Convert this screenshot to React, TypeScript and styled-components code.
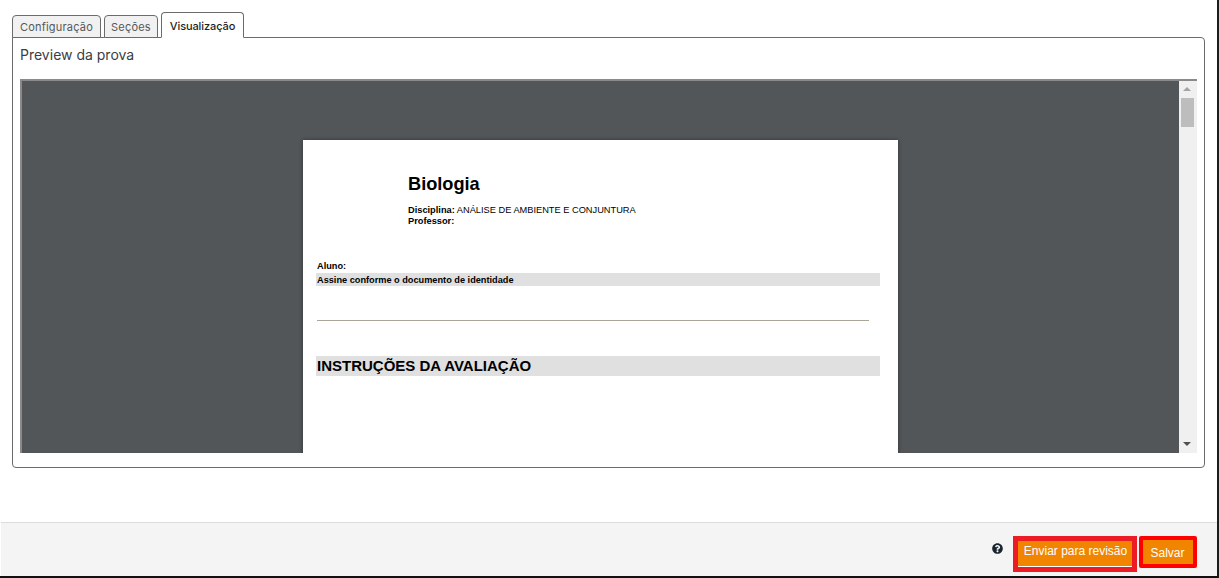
import styled, { createGlobalStyle } from "styled-components";
import { FaQuestionCircle } from "react-icons/fa";

const GlobalStyle = createGlobalStyle`
  html, body {
    margin: 0;
    padding: 0;
    background: #fff;
  }
  body {
    font-family: "Inter", "Noto Sans", sans-serif;
  }
`;

export default function App() {
  return (
    <>
      <GlobalStyle />
      <Screen>
        <Content>
          <Tabs>
            <Tab $width={89}>Configuração</Tab>
            <Tab $width={54}>Seções</Tab>
            <Tab $width={83} $active>
              Visualização
            </Tab>
          </Tabs>
          <Panel>
            <PanelTitle>Preview da prova</PanelTitle>
            <Viewer>
              <Canvas>
                <Page>
                  <Header>
                    <DocTitle>Biologia</DocTitle>
                    <MetaLine>
                      <b>Disciplina:</b> ANÁLISE DE AMBIENTE E CONJUNTURA
                    </MetaLine>
                    <MetaLine>
                      <b>Professor:</b>
                    </MetaLine>
                  </Header>
                  <StudentLabel>Aluno:</StudentLabel>
                  <SignBar>Assine conforme o documento de identidade</SignBar>
                  <SignLine />
                  <SectionBar>INSTRUÇÕES DA AVALIAÇÃO</SectionBar>
                </Page>
              </Canvas>
              <ScrollBar>
                <Arrow />
                <Track>
                  <Thumb />
                </Track>
                <Arrow $down />
              </ScrollBar>
            </Viewer>
          </Panel>
        </Content>
        <Footer>
          <HelpIcon />
          <ReviewButton>Enviar para revisão</ReviewButton>
          <SaveButton>Salvar</SaveButton>
        </Footer>
      </Screen>
    </>
  );
}

// ------- component styles ------
const Screen = styled.div`
  width: 1219px;
  height: 578px;
  box-sizing: border-box;
  border-right: 2px solid #1c1c1c;
  border-bottom: 2px solid #111;
  display: flex;
  flex-direction: column;
  overflow: hidden;
`;

const Content = styled.div`
  flex: 1;
  padding: 12px 12px 0;
`;

const Tabs = styled.div`
  display: flex;
  align-items: flex-end;
  gap: 3px;
  height: 26px;
  margin-bottom: -1px;
  position: relative;
  z-index: 1;
`;

const Tab = styled.div<{ $active?: boolean; $width: number }>`
  box-sizing: border-box;
  width: ${(p) => p.$width}px;
  height: ${(p) => (p.$active ? "26px" : "23px")};
  padding-top: ${(p) => (p.$active ? "2px" : "1px")};
  display: flex;
  align-items: center;
  justify-content: center;
  border: 1px solid #6b6b6b;
  border-bottom: ${(p) => (p.$active ? "1px solid #fff" : "1px solid #6b6b6b")};
  border-radius: 4px 4px 0 0;
  background: ${(p) => (p.$active ? "#fff" : "#f1f1f1")};
  color: ${(p) => (p.$active ? "#1d1f22" : "#54585c")};
  font-size: 11px;
  letter-spacing: ${(p) => (p.$active ? "-0.1px" : "0.2px")};
  font-weight: ${(p) => (p.$active ? 500 : 400)};
`;

const Panel = styled.div`
  box-sizing: border-box;
  width: 1193px;
  height: 431px;
  border: 1px solid #6b6b6b;
  border-radius: 0 4px 4px 4px;
  padding: 0 7px;
`;

const PanelTitle = styled.div`
  height: 41px;
  padding-top: 8px;
  box-sizing: border-box;
  color: #3a3d44;
  font-size: 14px;
  line-height: 18px;
`;

const Viewer = styled.div`
  display: flex;
  width: 1177px;
  height: 374px;
  box-sizing: border-box;
  border-top: 2px solid #8a8a8a;
  border-left: 2px solid #8a8a8a;
  overflow: hidden;
`;

const Canvas = styled.div`
  flex: 1;
  background: #525659;
  padding-top: 59px;
  display: flex;
  justify-content: center;
  overflow: hidden;
`;

const Page = styled.div`
  box-sizing: border-box;
  width: 595px;
  height: 500px;
  flex-shrink: 0;
  background: #fff;
  box-shadow: 0 0 4px rgba(0, 0, 0, 0.4);
  padding: 34px 18px 0 13px;
  font-family: "Liberation Sans", Arial, sans-serif;
  color: #000;
`;

const Header = styled.div`
  padding-left: 92px;
  height: 87px;
`;

const DocTitle = styled.div`
  font-size: 18.2px;
  font-weight: 700;
  line-height: 20px;
  margin-bottom: 11px;
`;

const MetaLine = styled.div`
  font-size: 9.25px;
  line-height: 11px;
`;

const StudentLabel = styled.div`
  font-size: 9.2px;
  font-weight: 700;
  line-height: 11px;
  padding-left: 1px;
  height: 12px;
`;

const SignBar = styled.div`
  box-sizing: border-box;
  height: 13px;
  background: #e0e0e0;
  font-size: 9.2px;
  font-weight: 700;
  line-height: 14px;
  padding-left: 1px;
`;

const SignLine = styled.div`
  height: 1px;
  width: 552px;
  margin: 34px 0 35px 1px;
  background: #aaa598;
`;

const SectionBar = styled.div`
  background: #e0e0e0;
  font-size: 15px;
  font-weight: 700;
  line-height: 20px;
  padding-left: 1px;
`;

const ScrollBar = styled.div`
  width: 18px;
  flex-shrink: 0;
  background: #f0f0f0;
  display: flex;
  flex-direction: column;
  align-items: flex-start;
`;

const Arrow = styled.div<{ $down?: boolean }>`
  width: 0;
  height: 0;
  flex-shrink: 0;
  margin: ${(p) => (p.$down ? "0 0 7px 4px" : "6px 0 0 4px")};
  border-left: 4px solid transparent;
  border-right: 4px solid transparent;
  ${(p) =>
    p.$down
      ? "border-top: 4px solid #505050;"
      : "border-bottom: 4px solid #a3a3a3;"}
`;

const Track = styled.div`
  flex: 1;
  padding: 7px 0 0 2px;
`;

const Thumb = styled.div`
  width: 13px;
  height: 29px;
  background: #bdbdbd;
`;

const Footer = styled.div`
  box-sizing: border-box;
  height: 54px;
  margin-left: 1px;
  background: #f4f4f4;
  border-top: 1px solid #dcdcdc;
  display: flex;
  align-items: flex-start;
  justify-content: flex-end;
  padding: 13px 20px 0 0;
  font-family: "Liberation Sans", Arial, sans-serif;
`;

const HelpIcon = styled(FaQuestionCircle)`
  width: 11px;
  height: 11px;
  margin: 7px 10px 0 0;
  color: #1a2530;
`;

const ReviewButton = styled.div`
  box-sizing: border-box;
  width: 124px;
  height: 36px;
  padding-left: 1px;
  border: 5px solid #ed1c24;
  background: #f28500;
  color: #fff;
  font-size: 12px;
  text-align: center;
  line-height: 21px;
  box-shadow: inset 0 -1px 0 #fff;
`;

const SaveButton = styled.div`
  box-sizing: border-box;
  width: 58px;
  height: 32px;
  margin-left: 2px;
  padding-right: 1px;
  border: 4px solid #fe0000;
  border-radius: 2px;
  background: #f28500;
  color: #fff;
  font-size: 12px;
  text-align: center;
  line-height: 27px;
`;
